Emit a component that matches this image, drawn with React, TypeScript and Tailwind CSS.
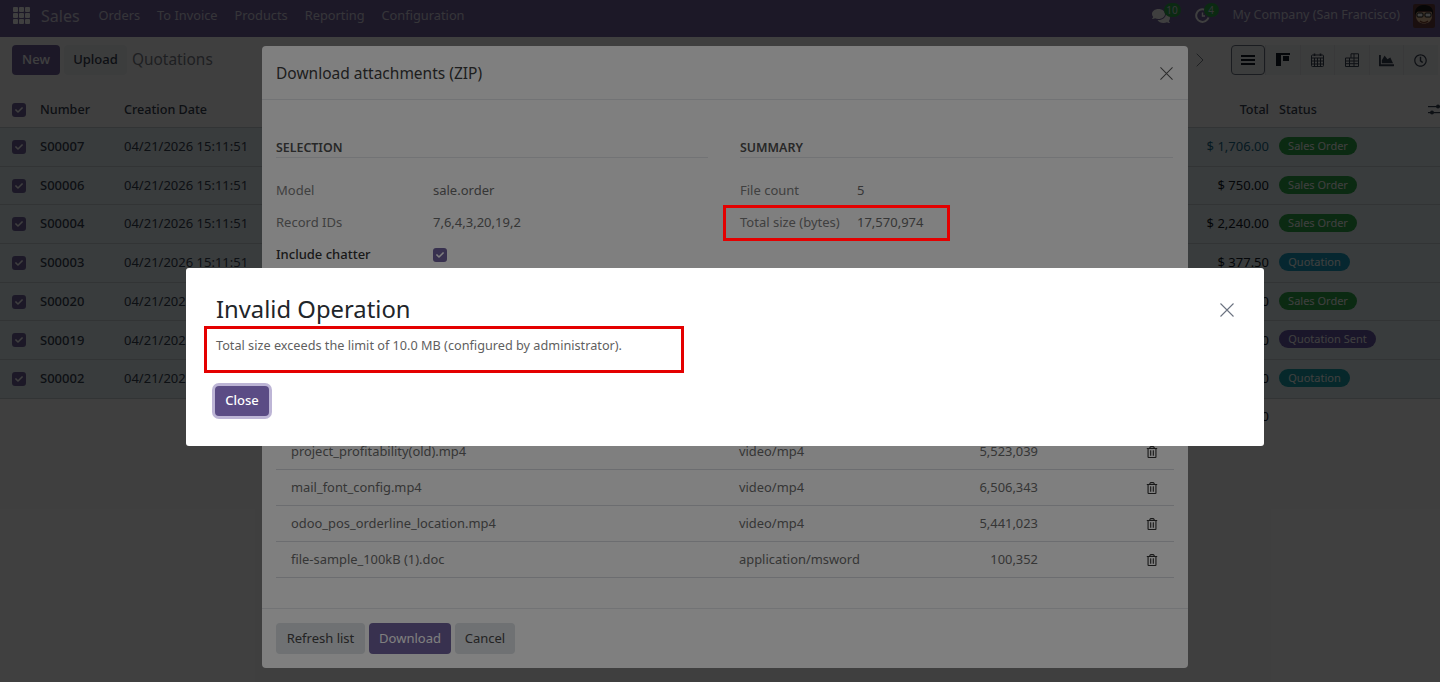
import { FaComments, FaChartArea, FaRegClock, FaRegTrashAlt, FaCheck } from 'react-icons/fa';

const navItems = ['Orders', 'To Invoice', 'Products', 'Reporting', 'Configuration'];

const greenPill = 'bg-[#2fa84a] text-white w-[78px]';
const bluePill = 'bg-[#1b9fc0] text-white w-[71px]';

const orders = [
  { no: 'S00007', date: '04/21/2026 15:11:51', total: '$ 1,706.00', status: 'Sales Order', pill: greenPill, blue: true },
  { no: 'S00006', date: '04/21/2026 15:11:51', total: '$ 750.00', status: 'Sales Order', pill: greenPill },
  { no: 'S00004', date: '04/21/2026 15:11:51', total: '$ 2,240.00', status: 'Sales Order', pill: greenPill },
  { no: 'S00003', date: '04/21/2026 15:11:51', total: '$ 377.50', status: 'Quotation', pill: bluePill },
  { no: 'S00020', date: '04/21/202', total: '$ 810.00', status: 'Sales Order', pill: greenPill },
  { no: 'S00019', date: '04/21/202', total: '$ 540.00', status: 'Quotation Sent', pill: 'bg-[#6a58a8] text-white w-[97px]' },
  { no: 'S00002', date: '04/21/202', total: '$ 930.00', status: 'Quotation', pill: 'bg-[#18a3ac] text-white w-[71px]' },
];

const files = [
  { name: 'project_profitability(old).mp4', type: 'video/mp4', size: '5,523,039' },
  { name: 'mail_font_config.mp4', type: 'video/mp4', size: '6,506,343' },
  { name: 'odoo_pos_orderline_location.mp4', type: 'video/mp4', size: '5,441,023' },
  { name: 'file-sample_100kB (1).doc', type: 'application/msword', size: '100,352' },
];

function CloseIcon({ size }: { size: number }) {
  return (
    <svg width={size} height={size} viewBox="0 0 14 14" fill="none" stroke="currentColor" strokeWidth="1.1">
      <path d="M0.5 0.5 L13.5 13.5 M13.5 0.5 L0.5 13.5" />
    </svg>
  );
}

function Check() {
  return (
    <span className="flex items-center justify-center w-[14px] h-[14px] rounded-[3px] bg-[#71639e] text-white">
      <FaCheck size={8} />
    </span>
  );
}

function Avatar() {
  return (
    <svg width="22" height="24" viewBox="0 0 22 24">
      <rect width="22" height="24" rx="2" fill="#6b3f3f" />
      <path d="M3 12 C3 22 19 22 19 12 L19 8 L3 8 Z" fill="#f0c8a0" />
      <path d="M2 11 C1 2 8 1 11 1 C16 1 21 3 20 11 L18 7 L5 7 Z" fill="#1a1a1a" />
      <rect x="4" y="9" width="6" height="4" rx="1" fill="#fff" stroke="#111" strokeWidth="1" />
      <rect x="12" y="9" width="6" height="4" rx="1" fill="#fff" stroke="#111" strokeWidth="1" />
      <path d="M7 17 C9 19 13 19 15 17" stroke="#7a3b2a" strokeWidth="1.2" fill="none" />
    </svg>
  );
}

function ActivityIcon() {
  return (
    <svg width="15" height="15" viewBox="0 0 15 15" fill="none" stroke="#fff" strokeWidth="2">
      <path d="M13.5 9.5 A6.3 6.3 0 1 1 9.5 1.6" />
      <path d="M7.5 4.5 V8 H10" strokeWidth="1.4" />
    </svg>
  );
}

function CalendarIcon() {
  return (
    <svg width="13" height="14" viewBox="0 0 13 14" fill="none" stroke="currentColor" strokeWidth="1">
      <rect x="0.5" y="2" width="12" height="11.5" rx="1" />
      <path d="M0.5 5 H12.5 M0.5 8 H12.5 M0.5 11 H12.5 M3.5 5 V13.5 M6.5 5 V13.5 M9.5 5 V13.5" />
      <path d="M3.5 0.5 V3 M9.5 0.5 V3" strokeWidth="1.6" />
    </svg>
  );
}

function PivotIcon() {
  return (
    <svg width="14" height="14" viewBox="0 0 14 14" fill="none" stroke="currentColor" strokeWidth="1">
      <path d="M0.5 5 H6 V0.8 H13.5 V13.5 H0.5 Z" />
      <path d="M0.5 8 H13.5 M0.5 10.7 H13.5 M6 5 H13.5 M4.5 5 V13.5 M9 0.8 V13.5" />
    </svg>
  );
}

function SlidersIcon() {
  return (
    <svg width="14" height="12" viewBox="0 0 14 12" fill="currentColor" className="-mr-[2px]">
      <rect x="0" y="2" width="14" height="1.2" />
      <rect x="0" y="8" width="14" height="1.2" />
      <circle cx="10" cy="2.6" r="2" />
      <circle cx="4" cy="8.6" r="2" />
    </svg>
  );
}

function ChevronThin() {
  return (
    <svg width="8" height="14" viewBox="0 0 8 14" fill="none" stroke="currentColor" strokeWidth="1">
      <path d="M0.7 0.7 L7 7 L0.7 13.3" />
    </svg>
  );
}

function Topbar() {
  return (
    <div className="h-[37px] bg-[#71639e] flex items-center pl-[13px] pr-[5px] pb-[6px] text-[#d8d4e4]">
      <div className="grid grid-cols-3 gap-[1px] w-[17px] h-[17px]">
        {Array.from({ length: 9 }).map((_, i) => (
          <span key={i} className="bg-white rounded-[1px]" />
        ))}
      </div>
      <span className="ml-[11px] text-[16px]">Sales</span>
      <div className="ml-[19px] flex gap-[17px] text-[12.8px]">
        {navItems.map((n) => (
          <span key={n}>{n}</span>
        ))}
      </div>
      <div className="ml-auto flex items-center">
        <div className="relative w-[43px] h-[24px] flex items-center">
          <FaComments size={18} className="text-white" />
          <span className="absolute left-[12px] top-[-1px] w-[17px] h-[14px] rounded-full bg-[#2fa84a] text-[10px] leading-[14px] text-center">10</span>
        </div>
        <div className="relative w-[38px] h-[24px] flex items-center">
          <ActivityIcon />
          <span className="absolute left-[9px] top-[-1px] w-[15px] h-[14px] rounded-full bg-[#2fa84a] text-[10px] leading-[14px] text-center">4</span>
        </div>
        <span className="text-[12.5px] mr-[13px]">My Company (San Francisco)</span>
        <Avatar />
      </div>
    </div>
  );
}

function ControlPanel() {
  const view = 'w-[34.5px] h-[30px] flex items-center justify-center bg-[#f3f4f6] border-l border-[#e5e7eb]';
  return (
    <div className="h-[56px] flex items-start pl-[12px] pr-[2.5px] pt-[8px]">
      <button className="w-[48px] h-[30px] rounded-[4px] bg-[#71639e] text-white text-[13px] font-medium">New</button>
      <button className="ml-[4px] w-[63px] h-[30px] rounded-[4px] bg-[#f3f4f6] text-[#374151] text-[13px] font-medium">Upload</button>
      <span className="ml-[5px] h-[30px] leading-[30px] text-[15.4px] text-[#7b8088]">Quotations</span>
      <div className="ml-auto flex items-center text-[#374151]">
        <span className="mr-[27px] text-[#7b8088]"><ChevronThin /></span>
        <div className="w-[34px] h-[30px] rounded-[4px] border border-[#6b7280] bg-[#f3f4f6] flex flex-col items-center justify-center gap-[2px]">
          <span className="w-[14px] h-[2px] bg-[#111827]" />
          <span className="w-[14px] h-[2px] bg-[#111827]" />
          <span className="w-[14px] h-[2px] bg-[#111827]" />
        </div>
        <div className={view}>
          <svg width="14" height="14" viewBox="0 0 14 14" fill="#111827">
            <rect width="14" height="2" />
            <rect y="2" width="5" height="11" />
            <rect x="7" y="3" width="6" height="5" />
          </svg>
        </div>
        <div className={view}><CalendarIcon /></div>
        <div className={view}><PivotIcon /></div>
        <div className={view}><FaChartArea size={15} /></div>
        <div className={view}><FaRegClock size={13} /></div>
      </div>
    </div>
  );
}

function OrderList() {
  return (
    <div className="text-[13px] text-[#374151]">
      <div className="h-[34px] flex items-center pl-[12px] text-[12.6px] font-medium">
        <Check />
        <span className="ml-[14px] w-[84px]">Number</span>
        <span>Creation Date</span>
        <span className="ml-auto w-[60px] text-right">Total</span>
        <span className="ml-[10px] w-[161px] flex items-center justify-between">
          Status
          <SlidersIcon />
        </span>
      </div>
      {orders.map((o) => (
        <div key={o.no} className="h-[38.7px] flex items-center pl-[12px] bg-[#e6f2f5] border-t border-[#c9d0d6]">
          <Check />
          <span className="ml-[14px] w-[84px] font-medium">{o.no}</span>
          <span>{o.date}</span>
          <span className={`ml-auto w-[90px] text-right ${o.blue ? 'text-[#1a6a8a]' : 'text-[#111827]'}`}>{o.total}</span>
          <span className="ml-[10px] w-[161px]">
            <span className={`block h-[18px] mb-[2px] rounded-full text-[11px] leading-[18px] text-center ${o.pill}`}>{o.status}</span>
          </span>
        </div>
      ))}
      <div className="h-[36px] flex items-center justify-end pr-[171px] border-t border-[#c9d0d6] text-[#111827]">$ 6,353.50</div>
    </div>
  );
}

function SelectionRow({ label, value }: { label: string; value: string }) {
  return (
    <div className="h-[32px] flex items-center">
      <span className="w-[157px] text-[#808080]">{label}</span>
      <span>{value}</span>
    </div>
  );
}

function DownloadModal() {
  const heading = 'h-[21px] pt-[2px] border-b border-[#e5e7eb] font-semibold text-[12.4px] text-[#505050]';
  return (
    <div className="absolute left-[262px] top-[46px] w-[926px] h-[622px] bg-white rounded-[4px] flex flex-col text-[13px] text-[#6c6c6c]">
      <div className="h-[54px] shrink-0 flex items-center justify-between pt-[2px] px-[14px] border-b border-[#e5e7eb]">
        <span className="text-[15.5px] text-[#3c3c3c]">Download attachments (ZIP)</span>
        <span className="text-[#5a5a5a] mr-[1px]"><CloseIcon size={13} /></span>
      </div>
      <div className="px-[14px] pt-[37px] grow">
        <div className="h-[297px] grid grid-cols-[432px_433px] gap-x-[32px]">
          <div>
            <div className={heading}>SELECTION</div>
            <div className="mt-[17px]">
              <SelectionRow label="Model" value="sale.order" />
              <SelectionRow label="Record IDs" value="7,6,4,3,20,19,2" />
              <div className="h-[32px] flex items-center">
                <span className="w-[157px] font-medium text-[#333333]">Include chatter</span>
                <Check />
              </div>
            </div>
          </div>
          <div>
            <div className={heading}>SUMMARY</div>
            <div className="mt-[17px]">
              <div className="h-[32px] flex items-center">
                <span className="w-[117px] text-[#808080]">File count</span>
                <span>5</span>
              </div>
              <div className="h-[32px] flex items-center">
                <span className="w-[117px] text-[#808080]">Total size (bytes)</span>
                <span>17,570,974</span>
              </div>
            </div>
          </div>
        </div>
        {files.map((f) => (
          <div key={f.name} className="h-[36px] grid grid-cols-[463px_150px_149px_1fr] items-center border-b border-[#d8dbe0] text-[12.9px]">
            <span className="pl-[15px]">{f.name}</span>
            <span>{f.type}</span>
            <span className="text-right">{f.size}</span>
            <span className="pl-[108px] text-[#333333]"><FaRegTrashAlt size={12} /></span>
          </div>
        ))}
      </div>
      <div className="shrink-0 h-[60px] border-t border-[#e5e7eb] flex items-center gap-[4px] px-[14px] text-[#464646]">
        <button className="w-[89px] h-[31px] rounded-[4px] bg-[#dee2e6]">Refresh list</button>
        <button className="w-[82px] h-[31px] rounded-[4px] bg-[#71639e] text-white">Download</button>
        <button className="w-[60px] h-[31px] rounded-[4px] bg-[#dee2e6]">Cancel</button>
      </div>
    </div>
  );
}

function ErrorModal() {
  return (
    <div className="absolute left-[186px] top-[268px] w-[1078px] h-[178px] bg-white rounded-[3px] pl-[30px] pt-[26px] text-[#5f5f5f]">
      <div className="flex items-center justify-between pr-[30px] h-[32px]">
        <span className="text-[23.8px] text-[#212529]">Invalid Operation</span>
        <span className="text-[#6b7280]"><CloseIcon size={14} /></span>
      </div>
      <p className="mt-[9px] h-[20px] text-[12.7px] leading-[20px]">Total size exceeds the limit of 10.0 MB (configured by administrator).</p>
      <button className="mt-[31px] -ml-px w-[54px] h-[30px] block rounded-[4px] bg-[#5b4c85] text-white text-[13px] font-medium ring-[3px] ring-[#bdb5d6]">Close</button>
    </div>
  );
}

export default function App() {
  return (
    <div className="relative w-[1440px] h-[682px] overflow-hidden bg-white font-['Noto_Sans',sans-serif]">
      <Topbar />
      <ControlPanel />
      <OrderList />
      <div className="absolute inset-0 bg-black/50" />
      <DownloadModal />
      <div className="absolute inset-0 bg-black/50" />
      <ErrorModal />
      <div className="absolute left-[723px] top-[205px] w-[227px] h-[36px] border-[3px] border-[#e40000]" />
      <div className="absolute left-[204px] top-[326px] w-[480px] h-[47px] border-[3px] border-[#e40000]" />
    </div>
  );
}
